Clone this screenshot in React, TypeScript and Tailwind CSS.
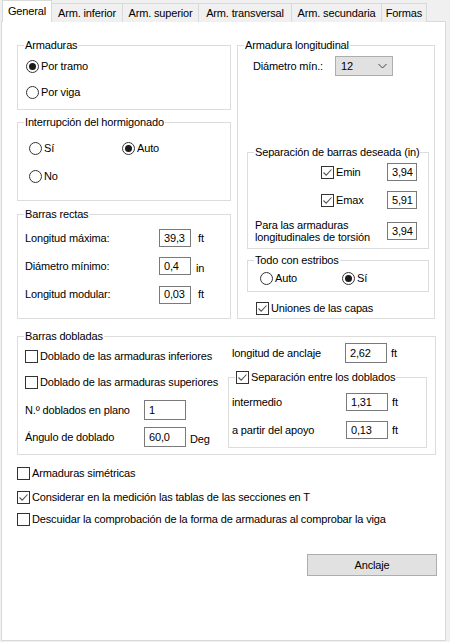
import React from "react";

const Radio = ({ checked = false, label }: { checked?: boolean; label: string }) => (
  <div className="flex items-center h-[16px]">
    <span className="w-[13px] h-[13px] rounded-full border border-[#333333] bg-white flex items-center justify-center shrink-0">
      {checked && <span className="w-[7px] h-[7px] rounded-full bg-[#1a1a1a]" />}
    </span>
    <span className="ml-[2px] leading-none whitespace-nowrap">{label}</span>
  </div>
);

const Check = ({ checked = false, label }: { checked?: boolean; label: React.ReactNode }) => (
  <div className="flex items-center h-[16px]">
    <span className="w-[13px] h-[13px] border border-[#333333] bg-white flex items-center justify-center shrink-0">
      {checked && (
        <svg width="11" height="11" viewBox="0 0 11 11">
          <path d="M1.5 5.5 L4.2 8.2 L9.5 2.5" fill="none" stroke="#555" strokeWidth="1.1" />
        </svg>
      )}
    </span>
    <span className="ml-[2px] leading-none whitespace-nowrap">{label}</span>
  </div>
);

const Field = ({ value, w, h = 18 }: { value: string; w: string; h?: number }) => (
  <div
    className={`${w} ${h === 18 ? "h-[18px]" : "h-[20px]"} border border-[#7a7a7a] bg-white flex items-center pl-[4px] overflow-hidden shrink-0 leading-none whitespace-nowrap`}
  >
    {value}
  </div>
);

const Group = ({
  title,
  className,
  children,
}: {
  title: React.ReactNode;
  className: string;
  children?: React.ReactNode;
}) => (
  <div className={`relative border border-[#dcdcdc] ${className}`}>
    <div className="absolute left-[6px] top-[-9px] bg-white px-[1px] leading-[16px] whitespace-nowrap">{title}</div>
    {children}
  </div>
);

const tabs = ["General", "Arm. inferior", "Arm. superior", "Arm. transversal", "Arm. secundaria", "Formas"];
const tabW = ["w-[50px]", "w-[71px]", "w-[76px]", "w-[93px]", "w-[90px]", "w-[45px]"];

export default function App() {
  return (
    <div
      className="w-[450px] h-[642px] bg-[#f0f0f0] text-[11px] tracking-[-0.15px] text-black overflow-hidden"
      style={{ fontFamily: '"Liberation Sans", Arial, sans-serif' }}
    >
      {/* tabs */}
      <div className="flex items-end h-[22px] pl-[2px] relative z-10">
        {tabs.map((t, i) =>
          i === 0 ? (
            <div
              key={t}
              className={`${tabW[i]} h-[22px] bg-white border border-b-0 border-[#d9d9d9] flex items-center justify-center pb-[1px] whitespace-nowrap`}
            >
              {t}
            </div>
          ) : (
            <div
              key={t}
              className={`${tabW[i]} h-[19px] bg-[#f0f0f0] border border-l-0 border-b-0 border-[#d9d9d9] flex items-center justify-center whitespace-nowrap`}
            >
              {t}
            </div>
          )
        )}
      </div>
      {/* panel */}
      <div className="ml-[1px] mt-[-1px] w-[445px] h-[620px] border border-[#d9d9d9] bg-white relative">
        <div className="flex pt-[23px] pl-[15px]">
          {/* left column */}
          <div className="flex flex-col w-[214px]">
            <Group title="Armaduras" className="h-[65px] pl-[8px] pt-[12px]">
              <Radio checked label="Por tramo" />
              <div className="mt-[10px]">
                <Radio label="Por viga" />
              </div>
            </Group>
            <Group title="Interrupción del hormigonado" className="mt-[12px] h-[79px] pl-[11px] pt-[17px]">
              <div className="flex">
                <div className="w-[93px]">
                  <Radio label="Sí" />
                </div>
                <Radio checked label="Auto" />
              </div>
              <div className="mt-[12px]">
                <Radio label="No" />
              </div>
            </Group>
            <Group title="Barras rectas" className="mt-[13px] h-[105px] pl-[7px] pt-[14px]">
              <div className="flex flex-col gap-[9px]">
                <div className="flex items-center">
                  <span className="w-[134px] whitespace-nowrap">Longitud máxima:</span>
                  <Field value="39,3" w="w-[32px]" />
                  <span className="ml-[7px]">ft</span>
                </div>
                <div className="flex items-center">
                  <span className="w-[134px] whitespace-nowrap">Diámetro mínimo:</span>
                  <Field value="0,4" w="w-[32px]" />
                  <span className="ml-[5px] mt-[4px]">in</span>
                </div>
                <div className="flex items-center">
                  <span className="w-[134px] whitespace-nowrap">Longitud modular:</span>
                  <Field value="0,03" w="w-[32px]" />
                  <span className="ml-[7px]">ft</span>
                </div>
              </div>
            </Group>
          </div>
          {/* right column */}
          <div className="ml-[6px] w-[198px]">
            <Group title="Armadura longitudinal" className="h-[274px] pt-[10px]">
              <div className="flex items-center pl-[15px]">
                <span className="w-[82px] whitespace-nowrap">Diámetro mín.:</span>
                <div className="w-[58px] h-[20px] bg-[#e1e1e1] border border-[#adadad] flex items-center justify-between pl-[5px] pr-[5px]">
                  <span>12</span>
                  <svg width="9" height="6" viewBox="0 0 9 6">
                    <path d="M0.5 1 L4.5 5 L8.5 1" fill="none" stroke="#444" strokeWidth="1" />
                  </svg>
                </div>
              </div>
              <Group title="Separación de barras deseada (in)" className="ml-[9px] mt-[76px] w-[182px] h-[97px]">
                <div className="flex flex-col pt-[10px]">
                  <div className="flex items-center pl-[73px]">
                    <div className="w-[66px]">
                      <Check checked label="Emin" />
                    </div>
                    <Field value="3,94" w="w-[30px]" />
                  </div>
                  <div className="flex items-center pl-[73px] mt-[10px]">
                    <div className="w-[66px]">
                      <Check checked label="Emax" />
                    </div>
                    <Field value="5,91" w="w-[30px]" />
                  </div>
                  <div className="flex items-center pl-[7px] mt-[10px]">
                    <div className="w-[132px] leading-[12px] whitespace-nowrap">
                      Para las armaduras
                      <br />
                      longitudinales de torsión
                    </div>
                    <Field value="3,94" w="w-[30px]" />
                  </div>
                </div>
              </Group>
              <Group title="Todo con estribos" className="ml-[9px] mt-[11px] w-[182px] h-[32px] pt-[9px] pl-[12px]">
                <div className="flex">
                  <div className="w-[82px]">
                    <Radio label="Auto" />
                  </div>
                  <Radio checked label="Sí" />
                </div>
              </Group>
              <div className="mt-[8px] pl-[18px]">
                <Check checked label="Uniones de las capas" />
              </div>
            </Group>
          </div>
        </div>

        {/* Barras dobladas */}
        <Group title="Barras dobladas" className="ml-[15px] mt-[17px] w-[419px] h-[119px] flex">
          <div className="w-[210px] pl-[7px] pt-[11px] flex flex-col">
            <Check label="Doblado de las armaduras inferiores" />
            <div className="mt-[10px]">
              <Check label="Doblado de las armaduras superiores" />
            </div>
            <div className="flex items-center mt-[10px]">
              <span className="w-[119px] whitespace-nowrap">N.º doblados en plano</span>
              <Field value="1" w="w-[42px]" h={20} />
            </div>
            <div className="flex items-center mt-[7px]">
              <span className="w-[119px] whitespace-nowrap">Ángulo de doblado</span>
              <Field value="60,0" w="w-[42px]" h={20} />
              <span className="ml-[4px] mt-[4px]">Deg</span>
            </div>
          </div>
          <div className="flex flex-col pt-[6px]">
            <div className="flex items-center pl-[4px]">
              <span className="w-[113px] whitespace-nowrap">longitud de anclaje</span>
              <Field value="2,62" w="w-[42px]" h={20} />
              <span className="ml-[4px]">ft</span>
            </div>
            <Group
              title={
                <div className="flex items-center">
                  <Check checked label="Separación entre los doblados" />
                </div>
              }
              className="mt-[14px] w-[199px] h-[71px] pt-[15px] pl-[3px]"
            >
              <div className="flex items-center">
                <span className="w-[114px] whitespace-nowrap">intermedio</span>
                <Field value="1,31" w="w-[42px]" />
                <span className="ml-[4px]">ft</span>
              </div>
              <div className="flex items-center mt-[10px]">
                <span className="w-[114px] whitespace-nowrap">a partir del apoyo</span>
                <Field value="0,13" w="w-[42px]" />
                <span className="ml-[4px]">ft</span>
              </div>
            </Group>
          </div>
        </Group>

        <div className="pl-[15px] mt-[10px] flex flex-col">
          <Check label="Armaduras simétricas" />
          <div className="mt-[8px]">
            <Check checked label="Considerar en la medición las tablas de las secciones en T" />
          </div>
          <div className="mt-[6px]">
            <Check label="Descuidar la comprobación de la forma de armaduras al comprobar la viga" />
          </div>
        </div>

        <div className="flex justify-end pr-[8px] mt-[27px]">
          <div className="w-[130px] h-[22px] bg-[#e1e1e1] border border-[#adadad] flex items-center justify-center">
            Anclaje
          </div>
        </div>
      </div>
    </div>
  );
}
